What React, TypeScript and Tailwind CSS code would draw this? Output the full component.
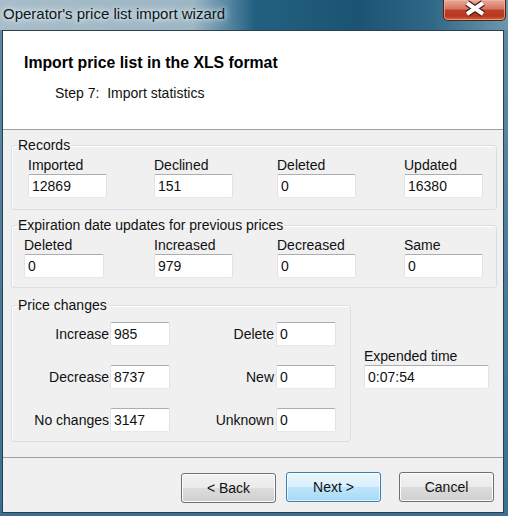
import React from "react"

const records = [
  { label: "Imported", value: "12869" },
  { label: "Declined", value: "151" },
  { label: "Deleted", value: "0" },
  { label: "Updated", value: "16380" },
]

const expiration = [
  { label: "Deleted", value: "0" },
  { label: "Increased", value: "979" },
  { label: "Decreased", value: "0" },
  { label: "Same", value: "0" },
]

const priceRows = [
  ["Increase", "985", "Delete", "0"],
  ["Decrease", "8737", "New", "0"],
  ["No changes", "3147", "Unknown", "0"],
]

function Field({ value, className = "" }: { value: string; className?: string }) {
  return (
    <div
      className={`h-[24px] flex items-center pl-[3px] bg-white rounded-[2px] border border-[#e2e3ea] border-t-[#abadb3] border-b-[#e3e9ef] ${className}`}
    >
      {value}
    </div>
  )
}

function Button({ children, primary = false, className = "" }: { children: React.ReactNode; primary?: boolean; className?: string }) {
  return (
    <div
      className={`w-[95px] h-[30px] flex items-center justify-center rounded-[3px] border ${
        primary
          ? "border-[#3c7fb1] bg-[linear-gradient(to_bottom,#eaf6fd_0%,#d9f0fc_50%,#bee6fd_50%,#a7d9f5_100%)] shadow-[inset_0_0_0_1px_#ffffffaa]"
          : "border-[#707070] bg-[linear-gradient(to_bottom,#f2f2f2_0%,#ebebeb_50%,#dddddd_50%,#cfcfcf_100%)] shadow-[inset_0_0_0_1px_#fcfcfc]"
      } ${className}`}
    >
      {children}
    </div>
  )
}

export default function App() {
  return (
    <div className="w-[508px] h-[516px] flex flex-col overflow-hidden bg-[linear-gradient(to_bottom,#5f8ca6_0%,#4a7d9b_50%,#3a7092_100%)] font-['Liberation_Sans',Arial,sans-serif] text-[14px] text-[#111]">
      {/* Title bar */}
      <div className="h-[30px] flex items-start justify-between bg-[linear-gradient(to_right,#a7bdc9_0%,#9db6c4_38%,#5f8ea8_44%,#23607f_50%,#1b5473_70%,#2f6887_85%,#6d98ae_100%)]">
        <span className="mt-[5px] ml-[3px] leading-[18px] text-[15px] text-[#0b1620] [text-shadow:0_0_8px_#ffffff,0_0_4px_#ffffffaa]">
          Operator's price list import wizard
        </span>
        <div className="mr-[2px] w-[63px] h-[21px] rounded-b-[5px] border border-t-0 border-[#5b1e12] bg-[linear-gradient(to_bottom,#e9a998_0%,#d47460_45%,#c0402a_50%,#b8361f_80%,#d2663f_100%)] shadow-[inset_0_0_0_1px_#f0b9a6aa]">
          <svg width="63" height="21" viewBox="0 0 63 21">
            <path d="M23 3 L39 14 M23 14 L39 3" stroke="#4a1a10" strokeWidth="6.5" />
            <path d="M23 3 L39 14 M23 14 L39 3" stroke="#ffffff" strokeWidth="4" />
          </svg>
        </div>
      </div>

      {/* Client area */}
      <div className="flex-1 ml-[2px] mr-[4px] mb-[3px] border border-[#2c3e4c] flex flex-col bg-[#f0f0f0]">
        {/* Header */}
        <div className="h-[99px] bg-white border-b border-[#a0a0a0] pl-[21px] pt-[23px]">
          <div className="text-[15.8px] font-bold leading-[18px] text-black">Import price list in the XLS format</div>
          <div className="mt-[13px] ml-[31px] leading-[16px]">Step 7:&nbsp; Import statistics</div>
        </div>

        {/* Body */}
        <div className="flex-1 pl-[8px] pt-[7px] flex flex-col">
          <fieldset className="w-[486px] border border-[#d5dfe5] rounded-[3px] shadow-[inset_1px_1px_0_#ffffff]">
            <legend className="ml-[5px] px-[1px] leading-[16px]">Records</legend>
            <div className="grid grid-cols-[126px_123px_127px_79px] pl-[16px] pt-[4px] pb-[11px]">
              {records.map((r) => (
                <div key={r.label}>
                  <div className="leading-[16px] mb-[1px]">{r.label}</div>
                  <Field value={r.value} className="w-[79px]" />
                </div>
              ))}
            </div>
          </fieldset>

          <fieldset className="mt-[7px] w-[486px] border border-[#d5dfe5] rounded-[3px] shadow-[inset_1px_1px_0_#ffffff]">
            <legend className="ml-[5px] px-[1px] leading-[16px]">Expiration date updates for previous prices</legend>
            <div className="grid grid-cols-[130px_123px_127px_79px] pl-[12px] pt-[4px] pb-[9px]">
              {expiration.map((r) => (
                <div key={r.label}>
                  <div className="leading-[16px] mb-[1px]">{r.label}</div>
                  <Field value={r.value} className={r.label === "Deleted" ? "w-[80px]" : "w-[79px]"} />
                </div>
              ))}
            </div>
          </fieldset>

          <div className="mt-[9px] flex items-start">
            <fieldset className="w-[340px] border border-[#d5dfe5] rounded-[3px] shadow-[inset_1px_1px_0_#ffffff]">
              <legend className="ml-[5px] px-[1px] leading-[16px]">Price changes</legend>
              <div className="grid grid-cols-[98px_60px_106px_60px] gap-y-[19px] pt-[9px] pb-[9px]">
                {priceRows.map(([l1, v1, l2, v2]) => (
                  <React.Fragment key={l1}>
                    <div className="h-[24px] flex items-center justify-end pr-[1px]">{l1}</div>
                    <Field value={v1} className="pl-[2px]" />
                    <div className="h-[24px] flex items-center justify-end pr-[2px]">{l2}</div>
                    <Field value={v2} className="pl-[2px]" />
                  </React.Fragment>
                ))}
              </div>
            </fieldset>

            <div className="ml-[13px] mt-[51px]">
              <div className="leading-[16px] mb-[1px]">Expended time</div>
              <Field value="0:07:54" className="w-[125px]" />
            </div>
          </div>
        </div>

        {/* Footer */}
        <div className="h-[55px] border-t border-[#a0a0a0] flex justify-end items-start pt-[14px] pr-[9px]">
          <Button className="mt-[1px]">&lt; Back</Button>
          <Button primary className="ml-[10px]">Next &gt;</Button>
          <Button className="ml-[18px]">Cancel</Button>
        </div>
      </div>
    </div>
  )
}
